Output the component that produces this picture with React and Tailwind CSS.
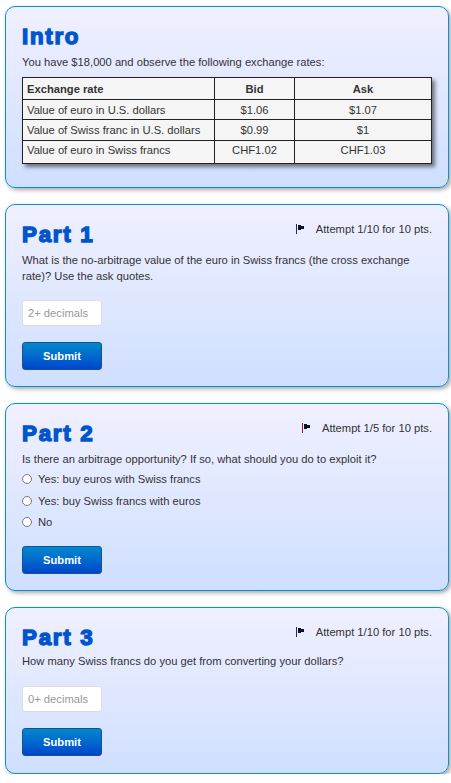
function FlagIcon({ pole }) {
  return (
    <svg width="9" height="10" viewBox="0 0 9 10" className="shrink-0 -mt-[1px]">
      <rect x="0" y="0" width="1" height="10" fill={pole} />
      <path d="M2 1 H5 V2 H8 V5 H5 V6 H2 Z" fill="#0b1030" />
    </svg>
  );
}

function Card({ title, attempt, pole, children }) {
  return (
    <section className="border border-[#0a90d2] rounded-[10px] bg-gradient-to-b from-[#f0f0ff] to-[#cfdfff] shadow-[2px_2px_4px_rgba(0,0,0,0.35)] px-4 pt-4 pb-4">
      <div className="flex items-start justify-between">
        <h2 className="font-bold text-[22.4px] leading-[28px] tracking-[1.7px] text-[#0055cc] [-webkit-text-stroke:1.4px_#0055cc]">{title}</h2>
        {attempt && (
          <div className="flex items-center gap-[11px] text-[11.2px] leading-[14px] mt-[1px] text-[#333]">
            <FlagIcon pole={pole} />
            <span>{attempt}</span>
          </div>
        )}
      </div>
      {children}
    </section>
  );
}

function NumberForm({ placeholder }) {
  return (
    <div className="flex flex-col items-start">
      <input
        placeholder={placeholder}
        className="w-20 h-[26px] bg-white border border-[#ddd] rounded-[3px] px-[5px] text-[11.2px] placeholder:text-[#999] mt-[16px]"
      />
      <SubmitButton />
    </div>
  );
}

function SubmitButton() {
  return (
    <button className="block w-20 h-[28px] mt-4 rounded-[3px] border border-[#15528f] bg-gradient-to-b from-[#0088cc] to-[#0044cc] text-white font-bold text-[11.2px]">
      Submit
    </button>
  );
}

// row heights in the reference are uneven, the last one is taller
const rows = [
  { cells: ['Value of euro in U.S. dollars', '$1.06', '$1.07'], tr: 'h-[20px]', td: 'pb-0' },
  { cells: ['Value of Swiss franc in U.S. dollars', '$0.99', '$1'], tr: 'h-[21px]', td: 'pb-[1px]' },
  { cells: ['Value of euro in Swiss francs', 'CHF1.02', 'CHF1.03'], tr: 'h-[23px]', td: 'pb-[4px]' },
];

const options = ['Yes: buy euros with Swiss francs', 'Yes: buy Swiss francs with euros', 'No'];

export default function App() {
  return (
    <div className="w-[451px] pl-[5px] pr-[2px] pt-[6px] flex flex-col gap-4 font-['Liberation_Sans',Arial,sans-serif] text-[11.2px] leading-[16px] text-[#333]">
      <Card title="Intro">
        <p className="mt-[3px]">You have $18,000 and observe the following exchange rates:</p>
        <table className="mt-[7px] mb-[7px] w-[409px] table-fixed border-collapse border border-[#222] bg-[#f5f5f5] shadow-[3px_3px_4px_rgba(0,0,0,0.5)]">
          <colgroup>
            <col className="w-[192px]" />
            <col className="w-[80px]" />
            <col className="w-[137px]" />
          </colgroup>
          <thead>
            <tr className="h-[22px]">
              <th className="border border-[#222] px-1 text-left font-bold">Exchange rate</th>
              <th className="border border-[#222] px-1 text-center font-bold">Bid</th>
              <th className="border border-[#222] px-1 text-center font-bold">Ask</th>
            </tr>
          </thead>
          <tbody>
            {rows.map(r => (
              <tr key={r.cells[0]} className={r.tr}>
                <td className={`border border-[#222] px-1 ${r.td}`}>{r.cells[0]}</td>
                <td className={`border border-[#222] px-1 text-center ${r.td}`}>{r.cells[1]}</td>
                <td className={`border border-[#222] px-1 text-center ${r.td}`}>{r.cells[2]}</td>
              </tr>
            ))}
          </tbody>
        </table>
      </Card>

      <Card title="Part 1" attempt="Attempt 1/10 for 10 pts." pole="#1a2a6c">
        <p className="mt-[3px]">What is the no-arbitrage value of the euro in Swiss francs (the cross exchange rate)? Use the ask quotes.</p>
        <NumberForm placeholder="2+ decimals" />
      </Card>

      <Card title="Part 2" attempt="Attempt 1/5 for 10 pts." pole="#8a1a3c">
        <p className="mt-[3px]">Is there an arbitrage opportunity? If so, what should you do to exploit it?</p>
        <div className="mt-[3px] mb-[-1px] flex flex-col gap-[3.5px]">
          {options.map(o => (
            <label key={o} className="flex items-center gap-[6px] h-[18px]">
              <input type="radio" name="part2" className="w-[10px] h-[10px] m-0" />
              <span>{o}</span>
            </label>
          ))}
        </div>
        <SubmitButton />
      </Card>

      <Card title="Part 3" attempt="Attempt 1/10 for 10 pts." pole="#1a2a6c">
        <p className="mt-[1px] mb-[1px]">How many Swiss francs do you get from converting your dollars?</p>
        <div className="pb-[1px]">
          <NumberForm placeholder="0+ decimals" />
        </div>
      </Card>
    </div>
  );
}
